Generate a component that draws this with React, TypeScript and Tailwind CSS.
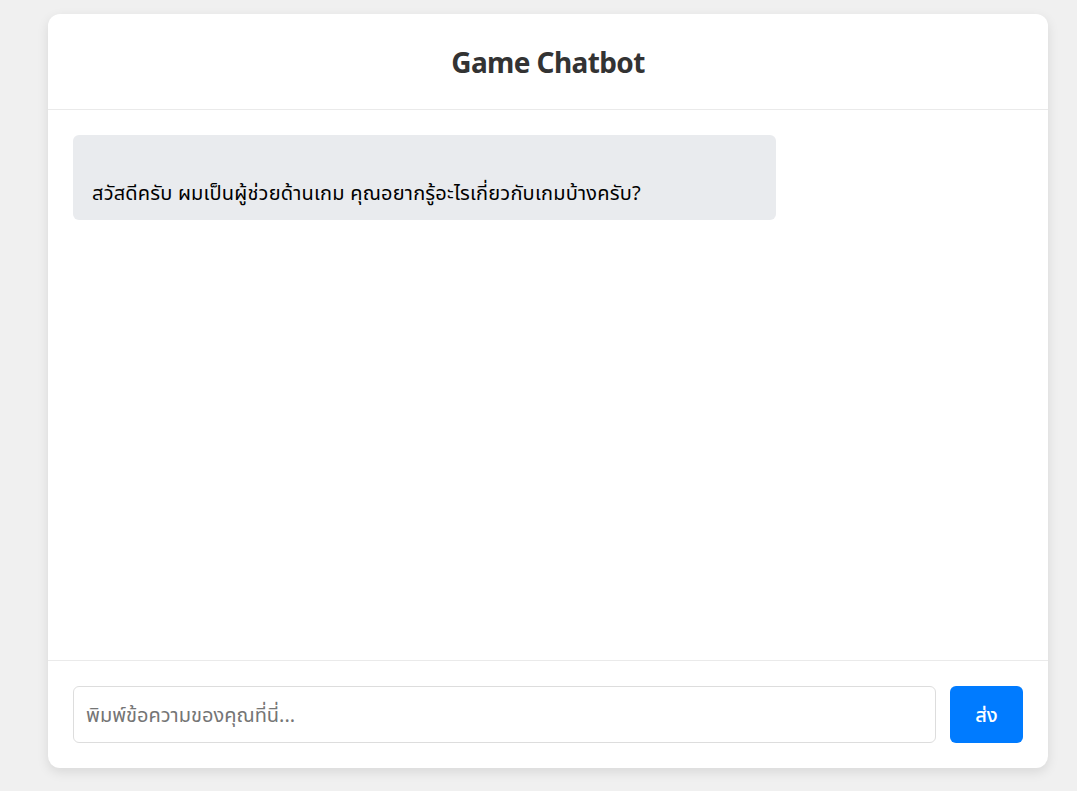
export default function App() {
  return (
    <div className="min-h-screen bg-[#f0f0f0] flex" style={{ fontFamily: '"Noto Sans", "Noto Sans Thai", sans-serif' }}>
      <div className="mt-[14px] ml-[48px] w-[1000px] h-[754px] bg-white rounded-[12px] shadow-[0_4px_12px_rgba(0,0,0,0.1)] flex flex-col overflow-hidden">
        <div className="h-[96px] border-b border-[#eaeaea] flex items-center justify-center">
          <h1 className="text-[28px] font-bold text-[#333] tracking-[-0.6px]">Game Chatbot</h1>
        </div>
        <div className="flex-1 px-[25px] pt-[25px]">
          <div className="w-[703px] h-[85px] bg-[#e9ebee] rounded-[6px] px-[19px] flex items-end pb-[13px]">
            <p className="text-[20px] text-black leading-[28px] tracking-[0.2px]">สวัสดีครับ ผมเป็นผู้ช่วยด้านเกม คุณอยากรู้อะไรเกี่ยวกับเกมบ้างครับ?</p>
          </div>
        </div>
        <div className="border-t border-[#eaeaea] p-[25px] flex gap-[14px]">
          <input
            className="flex-1 h-[57px] border border-[#dddddd] rounded-[6px] px-[12px] text-[20px] outline-none placeholder:text-[#757575]"
            placeholder="พิมพ์ข้อความของคุณที่นี่..."
          />
          <button className="w-[73px] h-[57px] bg-[#007bff] rounded-[6px] text-white text-[20px] font-medium">ส่ง</button>
        </div>
      </div>
    </div>
  );
}
